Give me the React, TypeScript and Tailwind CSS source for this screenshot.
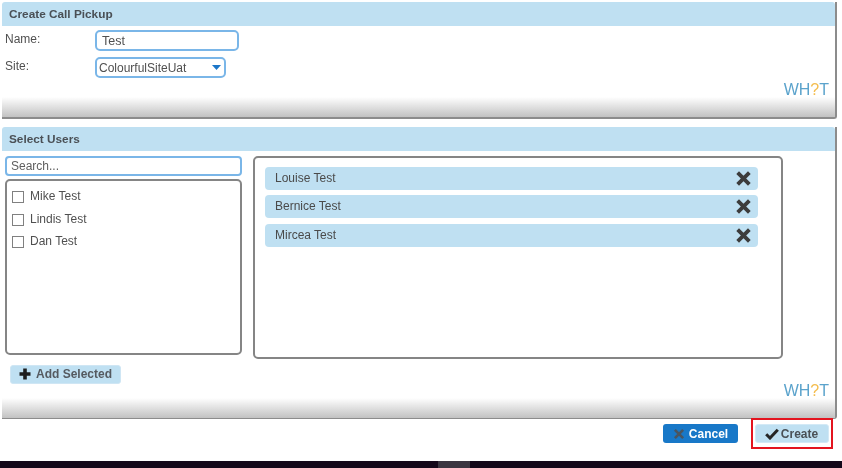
function Logo({ className = "" }: { className?: string }) {
  return (
    <div className={`self-end pr-[1px] text-[16px] leading-[16px] text-[#5ba3cc] whitespace-nowrap ${className}`}>
      WH<span className="text-[#f4bd4f]">?</span>T
    </div>
  );
}

function CrossIcon({ className }: { className: string }) {
  return (
    <svg viewBox="0 0 16 16" className={className}>
      <path d="M2.5 2.5 13.5 13.5M13.5 2.5 2.5 13.5" stroke="currentColor" strokeWidth="3.6" fill="none" />
    </svg>
  );
}

function PlusIcon() {
  return (
    <svg viewBox="0 0 12 12" className="h-[12px] w-[12px] -translate-y-[1px] text-[#1e1e1e]">
      <path d="M4.2 0.5H7.8V4.2H11.5V7.8H7.8V11.5H4.2V7.8H0.5V4.2H4.2Z" fill="currentColor" />
    </svg>
  );
}

function CheckIcon() {
  return (
    <svg viewBox="0 0 14 12" className="h-[12px] w-[14px] text-[#262626]">
      <path d="M1.2 6.2 5 10 12.8 1.8" stroke="currentColor" strokeWidth="3" fill="none" />
    </svg>
  );
}

function SectionHeader({ title }: { title: string }) {
  return (
    <div className="h-[24px] shrink-0 rounded-t-[3px] bg-[#bfe0f2] pl-[7px] text-[11.8px] leading-[24px] font-bold text-[#4a5056]">
      {title}
    </div>
  );
}

function FooterShade() {
  return <div className="h-[20px] shrink-0 bg-gradient-to-b from-white to-[#c2c2c2]" />;
}

function Person({ name, className = "" }: { name: string; className?: string }) {
  return (
    <div className={`flex h-[23px] items-center justify-between rounded-[4px] bg-[#bfe0f2] pr-[6px] pl-[10px] text-[12px] text-[#4a4a4a] ${className}`}>
      <span className="-translate-y-[1px]">{name}</span>
      <CrossIcon className="h-[17px] w-[17px] text-[#3c3c3c]" />
    </div>
  );
}

function Option({ name }: { name: string }) {
  return (
    <label className="flex h-[22.5px] items-center gap-[6px] text-[12px] text-[#505050]">
      <span className="h-[12px] w-[12px] border border-[#808080] bg-white" />
      <span className="-translate-y-[1px]">{name}</span>
    </label>
  );
}

export default function App() {
  return (
    <div className="flex h-[468px] w-[842px] flex-col overflow-hidden bg-white pt-[2px] font-['Liberation_Sans',Arial,sans-serif] blur-[0.4px]">
      <section className="ml-[2px] flex h-[117px] w-[835px] shrink-0 flex-col rounded-br-[3px] border-r-2 border-b-2 border-[#8c8c8c]">
        <SectionHeader title="Create Call Pickup" />
        <div className="flex min-h-0 flex-1 flex-col pt-[4px] pr-[5px] pl-[3px]">
          <div className="flex h-[21px] items-center">
            <span className="w-[90px] -translate-y-[2px] text-[12px] text-[#505050]">Name:</span>
            <input
              readOnly
              value="Test"
              className="h-[21px] w-[144px] rounded-[5px] border-2 border-[#7ab6e8] bg-white pl-[5px] text-[12.5px] text-[#505050] outline-none"
            />
          </div>
          <div className="mt-[6px] flex h-[21px] items-center">
            <span className="w-[90px] -translate-y-[2px] text-[12px] text-[#505050]">Site:</span>
            <div className="relative flex h-[21px] w-[131px] items-center rounded-[5px] border-2 border-[#7ab6e8] bg-white pl-[2px] text-[12px] text-[#505050]">
              ColourfulSiteUat
              <svg viewBox="0 0 9 5" className="absolute top-[6px] right-[3px] h-[5px] w-[9px]">
                <path d="M0 0H9L4.5 5Z" fill="#1b76c8" />
              </svg>
            </div>
          </div>
          <div className="mt-[4px] flex justify-end">
            <Logo />
          </div>
        </div>
        <FooterShade />
      </section>

      <section className="mt-[8px] ml-[2px] flex h-[292px] w-[835px] shrink-0 flex-col rounded-br-[3px] border-r-2 border-b border-[#8c8c8c]">
        <SectionHeader title="Select Users" />
        <div className="flex min-h-0 flex-1 flex-col pt-[5px] pr-[5px] pl-[3px]">
          <div className="flex gap-[11px]">
            <div className="flex w-[237px] shrink-0 flex-col gap-[3px]">
              <input
                readOnly
                placeholder="Search..."
                className="h-[20px] w-full rounded-[4px] border-2 border-[#7ab6e8] bg-white pl-[4px] text-[12px] text-[#505050] outline-none placeholder:text-[#606060]"
              />
              <div className="flex h-[176px] flex-col rounded-[5px] border-2 border-[#858585] pt-[5px] pl-[5px]">
                <Option name="Mike Test" />
                <Option name="Lindis Test" />
                <Option name="Dan Test" />
              </div>
            </div>
            <div className="flex h-[203px] w-[530px] shrink-0 flex-col gap-[5px] rounded-[5px] border-2 border-[#858585] pt-[9px] pr-[23px] pl-[10px]">
              <Person name="Louise Test" />
              <Person name="Bernice Test" />
              <Person name="Mircea Test" className="mt-[1px]" />
            </div>
          </div>
          <button className="mt-[6px] ml-[5px] flex h-[19px] w-[111px] items-center gap-[5px] rounded-[3px] border border-[#cfe6f4] bg-[#bfe0f2] pl-[8px] text-[12px] font-bold text-[#555a60]">
            <PlusIcon />
            <span className="-translate-y-[1px]">Add Selected</span>
          </button>
          <div className="flex justify-end">
            <Logo className="-mt-[1px]" />
          </div>
        </div>
        <FooterShade />
      </section>

      <div className="flex h-[29px] shrink-0 items-center justify-end gap-[13px] pr-[9px]">
        <button className="flex h-[19px] w-[75px] items-center justify-center gap-[4px] rounded-[3px] bg-[#1878c8] text-[12px] font-bold text-white">
          <CrossIcon className="h-[12px] w-[12px] text-[#4a5560]" />
          Cancel
        </button>
        <div className="border-2 border-[#e3141f] px-[2px] py-[4px]">
          <button className="flex h-[19px] w-[74px] items-center justify-center gap-[2px] rounded-[3px] border border-[#d3e9f6] bg-[#bfe0f2] pr-[1px] text-[12px] font-bold text-[#4a5056]">
            <CheckIcon />
            Create
          </button>
        </div>
      </div>

      <div className="mt-auto flex h-[7px] shrink-0 bg-[#14081a]">
        <div className="ml-[438px] h-[7px] w-[32px] bg-[#3a3540]" />
      </div>
    </div>
  );
}
